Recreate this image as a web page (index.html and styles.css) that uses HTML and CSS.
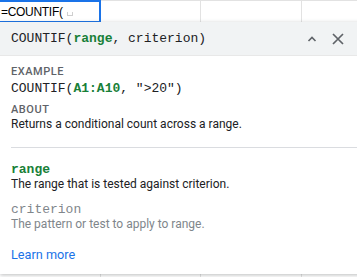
FILE: index.html
```html
<!DOCTYPE html>
<html lang="en">
<head>
    <meta charset="UTF-8">
    <title>COUNTIF help</title>
    <link rel="stylesheet" href="styles.css">
</head>
<body>
    <div class="sheet">
        <div class="row top">
            <div class="cell active">=COUNTIF(<span class="caret"></span></div>
            <div class="cell"></div>
            <div class="cell"></div>
            <div class="cell"></div>
        </div>
        <div class="row">
            <div class="cell"></div>
            <div class="cell"></div>
            <div class="cell"></div>
            <div class="cell"></div>
        </div>
    </div>

    <div class="help">
        <div class="help-head">
            <div class="signature">COUNTIF(<b class="arg">range</b>, criterion)</div>
            <div class="tools">
                <svg width="12" height="12" viewBox="0 0 12 12"><path d="M2.5 8 L6 4.5 L9.5 8" fill="none" stroke="#5f6368" stroke-width="1.6"/></svg>
                <svg width="14" height="14" viewBox="0 0 14 14"><path d="M2 2 L12 12 M12 2 L2 12" fill="none" stroke="#5f6368" stroke-width="1.7"/></svg>
            </div>
        </div>
        <div class="help-body">
            <div class="label">Example</div>
            <div class="code first">COUNTIF(<b class="arg">A1:A10</b>, "&gt;20")</div>
            <div class="label">About</div>
            <div class="text">Returns a conditional count across a range.</div>
            <hr>
            <div class="code arg">range</div>
            <div class="text">The range that is tested against criterion.</div>
            <div class="code muted">criterion</div>
            <div class="text muted">The pattern or test to apply to range.</div>
            <a class="more" href="#">Learn more</a>
        </div>
    </div>
</body>
</html>
```

FILE: styles.css
```css
body {
    margin: 0;
    font-family: Roboto, Arial, sans-serif;
    background: #fff;
    overflow: hidden;
}
.sheet {
    border-top: 1px solid #e2e2e2;
}
.row {
    display: flex;
    height: 254px;
    border-bottom: 1px solid #e2e2e2;
}
.row.top {
    height: 21px;
}
.cell {
    width: 100px;
    flex: none;
    border-right: 1px solid #e2e2e2;
    box-sizing: border-box;
}
.cell:first-child {
    width: 101px;
}
.cell:nth-child(3) {
    width: 101px;
}
.cell.active {
    margin: -1px 0 0 -2px;
    width: 103px;
    height: 23px;
    border: 2px solid #1a73e8;
    padding: 3px 0 0 1px;
    font-family: Arial, "Liberation Sans", sans-serif;
    font-size: 12px;
    letter-spacing: -0.3px;
    color: #000;
}
.caret {
    display: inline-block;
    width: 4px;
    height: 3px;
    margin-left: 4px;
    border: 1px solid #cfcfcf;
    border-top: none;
}
.help {
    position: absolute;
    top: 22px;
    left: 0;
    width: 362px;
    height: 252px;
    background: #fff;
    box-shadow: 0 1px 4px rgba(60,64,67,0.35);
}
.help-head {
    display: flex;
    align-items: center;
    justify-content: space-between;
    height: 33px;
    padding: 0 17px 0 11px;
    background: #f1f3f4;
    border-bottom: 1px solid #e8e8e8;
}
.signature, .code {
    font-family: "Liberation Mono", "Courier New", monospace;
    font-size: 13px;
    color: #202124;
}
.tools {
    display: flex;
    align-items: center;
    gap: 13px;
}
.help-body {
    padding: 9px 0 0 11px;
}
.label {
    font-size: 11px;
    font-weight: 500;
    letter-spacing: 0.55px;
    text-transform: uppercase;
    color: #5f6368;
    line-height: 14px;
}
.code {
    line-height: 14px;
}
.code.first {
    margin: 3px 0 7px 0;
}
.arg {
    color: #188038;
    font-weight: bold;
}
.text {
    font-size: 12px;
    color: #202124;
    line-height: 15px;
}
.text + .code {
    margin-top: 11px;
}
.muted,
.text.muted {
    color: #80868b;
}
hr {
    border: none;
    border-top: 1px solid #dadce0;
    margin: 15px 0 15px 0;
}
.more {
    display: inline-block;
    margin-top: 15px;
    font-size: 12.7px;
    line-height: 15px;
    color: #1a73e8;
    text-decoration: none;
}
```
